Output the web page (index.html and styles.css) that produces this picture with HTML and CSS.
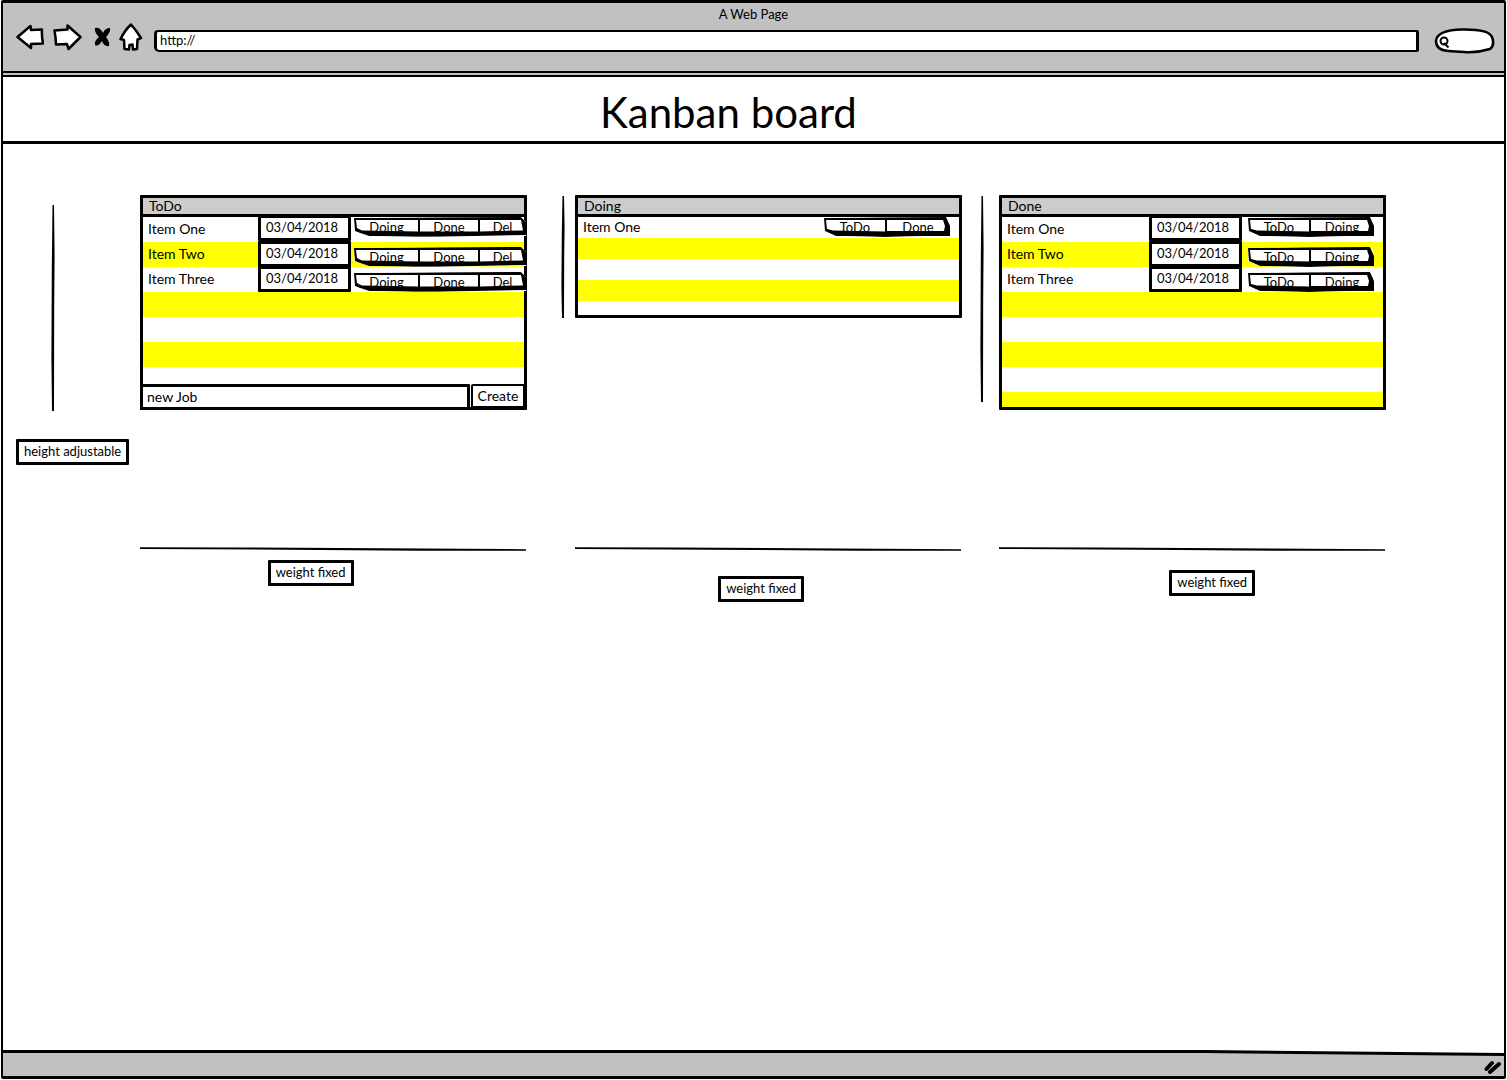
FILE: index.html
```html
<!DOCTYPE html>
<html lang="en">
<head>
<meta charset="utf-8">
<title>Kanban board</title>
<link rel="stylesheet" href="styles.css">
</head>
<body>
<svg class="defs" aria-hidden="true">
  <symbol id="vrule" viewBox="0 0 4 200" preserveAspectRatio="none"><path d="M1.500 0 H3 L3.600 50 L3.200 100 L3 200 L1 200 L.4 150 L.8 60 Z"/></symbol>
  <symbol id="hrule" viewBox="0 0 387 4" preserveAspectRatio="none"><path d="M0 .2 L100 .4 L386 2.200 V3.800 H280 L180 2.900 L0 2 Z"/></symbol>
  <symbol id="two" viewBox="0 0 126 20" preserveAspectRatio="none">
    <path fill-rule="evenodd" d="M0 1 L60 0 L122 0 L126 9 V19 L100 19 L60 20 L12 19 L1 14 Z M2 3 L3 12 L9 13.500 L61 14.500 V3 Z M63 3 V14 H120 L121 9 L119 3 Z"/>
  </symbol>
  <symbol id="three" viewBox="0 0 172 20" preserveAspectRatio="none">
    <path fill-rule="evenodd" d="M0 1 L90 0 L168 0 L172 5 V18 L120 19 L60 20 L12 19 L1 14 Z M2 3 L3 11 L8 13.500 L64 14.500 V3 Z M66 3 V14.500 H124 V3 Z M126 3 V14.500 L169 13.500 L167 3 Z"/>
  </symbol>
</svg>
<div class="window">
  <header class="chrome">
    <div class="caption">A Web Page</div>
    <div class="toolbar">
      <button class="tool" aria-label="Back"><svg width="28" height="26" viewBox="0 0 28 26"><path class="shape" d="M1.500 13 L14.500 2 L15 6 L26 5.500 Q25.500 12 27 19.500 L15 20 L15 24 Z"/></svg></button>
      <button class="tool forward" aria-label="Forward"><svg width="29" height="27" viewBox="0 0 29 27"><path class="shape" d="M1.500 6.500 L14.500 5.500 V1.500 L27.500 13 L15.500 25 L14 20 L3 20.500 Q3 15 1.500 6.500 Z"/></svg></button>
      <button class="tool stop" aria-label="Stop"><svg width="17" height="20" viewBox="0 0 17 20"><path d="M1 1 Q6 0 9 6 Q11 1 16 1 Q17 5 12 10 Q16 15 15 19 Q10 20 8 14 Q4 20 1 18 Q0 14 5 10 Q0 5 1 1 Z"/></svg></button>
      <button class="tool home" aria-label="Home"><svg width="24" height="28" viewBox="0 0 24 28"><path class="shape" d="M12 1.500 Q17 7 22 15 L18.500 16.500 L18 26 L14 26.500 L13.500 21.500 L10.500 22 L10 26.500 L5.500 26 L5 17 L1.500 16 Q6 7 12 1.500 Z"/></svg></button>
      <input class="address" type="text" value="http://" aria-label="Address">
      <label class="search">
        <svg width="62" height="27" viewBox="0 0 62 27" aria-hidden="true"><path class="shape" d="M3 13 Q4 2 29 1.500 Q56 1 59 9 Q62 17 57 21 Q44 25 31 24 L15 23 Q3 22 3 13 Z"/><ellipse cx="11" cy="13" rx="3.500" ry="3.500" class="lens"/><path class="lens" d="M11 15 L15.500 19.500"/></svg>
        <input type="search" aria-label="Search">
      </label>
    </div>
  </header>

  <div class="heading"><h1>Kanban board</h1></div>

  <main class="board">
    <div class="gutter first">
      <svg class="vrule tall" aria-hidden="true"><use href="#vrule"/></svg>
      <p class="note">height adjustable</p>
    </div>

    <section class="lane">
      <div class="space">
        <div class="card todo">
          <h2>ToDo</h2>
          <ul>
            <li><span>Item One</span><input class="date" type="text" value="03/04/2018" aria-label="Item One date"><div class="moves three"><button>Doing</button><button>Done</button><button>Del</button><svg aria-hidden="true"><use href="#three"/></svg></div></li>
            <li><span>Item Two</span><input class="date" type="text" value="03/04/2018" aria-label="Item Two date"><div class="moves three"><button>Doing</button><button>Done</button><button>Del</button><svg aria-hidden="true"><use href="#three"/></svg></div></li>
            <li><span>Item Three</span><input class="date" type="text" value="03/04/2018" aria-label="Item Three date"><div class="moves three"><button>Doing</button><button>Done</button><button>Del</button><svg aria-hidden="true"><use href="#three"/></svg></div></li>
          </ul>
          <form class="create">
            <input type="text" value="new Job" aria-label="New job">
            <button type="button">Create</button>
          </form>
        </div>
      </div>
      <svg class="hrule" aria-hidden="true"><use href="#hrule"/></svg>
      <p class="note left">weight fixed</p>
    </section>

    <div class="gutter second"><svg class="vrule short" aria-hidden="true"><use href="#vrule"/></svg></div>

    <section class="lane">
      <div class="space">
        <div class="card doing">
          <h2>Doing</h2>
          <ul>
            <li><span>Item One</span><div class="moves"><button>ToDo</button><button>Done</button><svg aria-hidden="true"><use href="#two"/></svg></div></li>
          </ul>
        </div>
      </div>
      <svg class="hrule" aria-hidden="true"><use href="#hrule"/></svg>
      <p class="note middle">weight fixed</p>
    </section>

    <div class="gutter third"><svg class="vrule tall" aria-hidden="true"><use href="#vrule"/></svg></div>

    <section class="lane">
      <div class="space">
        <div class="card done">
          <h2>Done</h2>
          <ul>
            <li><span>Item One</span><input class="date" type="text" value="03/04/2018" aria-label="Item One date"><div class="moves"><button>ToDo</button><button>Doing</button><svg aria-hidden="true"><use href="#two"/></svg></div></li>
            <li><span>Item Two</span><input class="date" type="text" value="03/04/2018" aria-label="Item Two date"><div class="moves"><button>ToDo</button><button>Doing</button><svg aria-hidden="true"><use href="#two"/></svg></div></li>
            <li><span>Item Three</span><input class="date" type="text" value="03/04/2018" aria-label="Item Three date"><div class="moves"><button>ToDo</button><button>Doing</button><svg aria-hidden="true"><use href="#two"/></svg></div></li>
          </ul>
        </div>
      </div>
      <svg class="hrule" aria-hidden="true"><use href="#hrule"/></svg>
      <p class="note right">weight fixed</p>
    </section>
  </main>

  <footer class="status">
    <svg class="edge" viewBox="0 0 1500 6" preserveAspectRatio="none" aria-hidden="true"><path class="page" d="M0 0 H1500 V4 L1300 2 H0 Z"/><path d="M0 0 L1200 0 L1500 3 V6 L1200 3 H0 Z"/></svg>
    <svg class="grip" width="18" height="14" viewBox="0 0 18 14" aria-hidden="true"><path d="M2.500 9 L8 3 M6 12 L15 4"/></svg>
  </footer>
</div>
</body>
</html>
```
FILE: styles.css
```css
* { box-sizing: border-box; }

body {
  margin: 0;
  padding: 0 1px 1px;
  background: #fff;
  color: #000;
  font: 13px/16px Lato, "Open Sans", sans-serif;
}

h1, h2, p, ul { margin: 0; padding: 0; font-weight: 400; }
ul { list-style: none; }
button, input { margin: 0; color: inherit; font: inherit; }
svg { display: block; }
.defs { position: absolute; width: 0; height: 0; }

.window {
  display: flex;
  flex-direction: column;
  min-height: calc(100vh - 1px);
  border: solid #000;
  border-width: 3px 2px;
  border-radius: 2px;
}

/* browser chrome */
.chrome {
  height: 74px;
  background: #c1c1c1;
  border-bottom: 6px double #000;
}
.caption { padding-top: 3px; text-align: center; }
.toolbar {
  display: flex;
  align-items: center;
  height: 30px;
  padding: 0 9px 0 13px;
}
.tool { padding: 0; border: 0; background: none; }
.forward { margin-left: 9px; }
.stop { margin-left: 12px; }
.home { margin-left: 8px; }
.shape { fill: #fff; stroke: #000; stroke-width: 2.500px; stroke-linejoin: round; }
.lens { fill: none; stroke: #000; stroke-width: 2px; }
.address {
  flex: 1;
  min-width: 0;
  height: 22px;
  margin: 8px 14px 0 11px;
  padding: 0 3px 2px;
  background: #fff;
  border: 3px solid #000;
  border-width: 2px 3px;
  border-radius: 4px 2px 2px 5px;
}
.search { position: relative; margin-top: 8px; }
.search input {
  position: absolute;
  inset: 4px 6px 4px 18px;
  width: 36px;
  border: 0;
  background: none;
}

.heading {
  padding: 13px 50px 7px 0;
  border-bottom: 3px solid #000;
  text-align: center;
}
h1 { font-size: 42px; line-height: 44px; }

/* board */
.board {
  flex: 1;
  display: grid;
  grid-template-columns: 137fr 387fr 48fr 387fr 37fr 387fr 118fr;
  align-items: start;
  padding-top: 51px;
}
.lane { min-width: 0; }
.space { min-height: 352px; }

.gutter { padding-top: 1px; }
.gutter.first { padding: 10px 5px 0 13px; }
.gutter.second { padding-left: 34px; }
.gutter.third { padding-left: 18px; }
.vrule { width: 4px; height: 206px; }
.vrule.short { height: 122px; }
.first .vrule { margin: 0 0 28px 35px; }
.hrule { width: 100%; height: 4px; }

.note {
  width: max-content;
  margin-top: 9px;
  padding: 1px 5px 3px;
  border: 3px solid #000;
  border-radius: 1px;
  background: #fff;
}
.note.left { margin-left: 33%; }
.note.middle { margin-top: 25px; margin-left: 37%; }
.note.right { margin-top: 19px; margin-left: 44%; }

.card { border: 3px solid #000; border-radius: 1px; }
.card h2 {
  height: 19px;
  padding-left: 6px;
  background: #ccc;
  border-bottom: 3px solid #000;
  font-size: 14px;
}
.card ul { --row: 25px; background: repeating-linear-gradient(#fff 0 var(--row), #ff0 var(--row) calc(2 * var(--row))); }
.todo ul { height: 167px; }
.done ul { height: 190px; padding-right: 9px; }
.doing ul { --row: 21px; height: 98px; padding-right: 9px; }
.card li {
  display: flex;
  align-items: flex-end;
  gap: 3px;
  height: var(--row);
  padding-left: 5px;
}
.done li { gap: 6px; }
.card li:first-child { align-items: flex-start; }
.card li span { flex: 1; align-self: center; padding-bottom: 2px; font-size: 14px; }

.date {
  flex: none;
  width: 93px;
  height: 26px;
  padding: 0 5px 2px;
  border: 3px solid #000;
  border-radius: 1px;
  background: #fff;
}
.card li:first-child .date { margin-top: -2px; }

.moves {
  position: relative;
  display: grid;
  grid-template-columns: 62px 64px;
  flex: none;
  height: 20px;
  overflow: hidden;
  background: #fff;
  clip-path: polygon(0 5%, 97% 0, 100% 25%, 100% 95%, 50% 100%, 9% 95%, 0 70%);
}
.moves.three { grid-template-columns: 65px 60px 47px; margin-right: -2px; }
.moves button {
  height: 20px;
  padding: 0;
  border: 0;
  background: none;
}
.moves svg {
  position: absolute;
  inset: 0;
  width: 100%;
  height: 100%;
  pointer-events: none;
}

.create { display: flex; gap: 1px; margin: 0 -3px -3px; }
.create input {
  flex: 1;
  min-width: 0;
  height: 26px;
  padding: 0 4px 2px;
  border: 3px solid #000;
  border-radius: 1px;
  background: #fff;
  font-size: 14px;
}
.create button {
  width: 56px;
  height: 26px;
  padding: 0;
  border: solid #000;
  border-width: 2px 4px 4px 2px;
  border-radius: 2px;
  background: #fff;
  font-size: 14px;
}

/* status bar */
.status { display: flex; flex-wrap: wrap; justify-content: flex-end; align-content: flex-start; height: 26px; background: #c1c1c1; }
.edge { width: 100%; height: 6px; }
.page { fill: #fff; }
.grip { margin: 4px 2px 0 0; fill: none; stroke: #000; stroke-width: 4px; stroke-linecap: round; }
```
